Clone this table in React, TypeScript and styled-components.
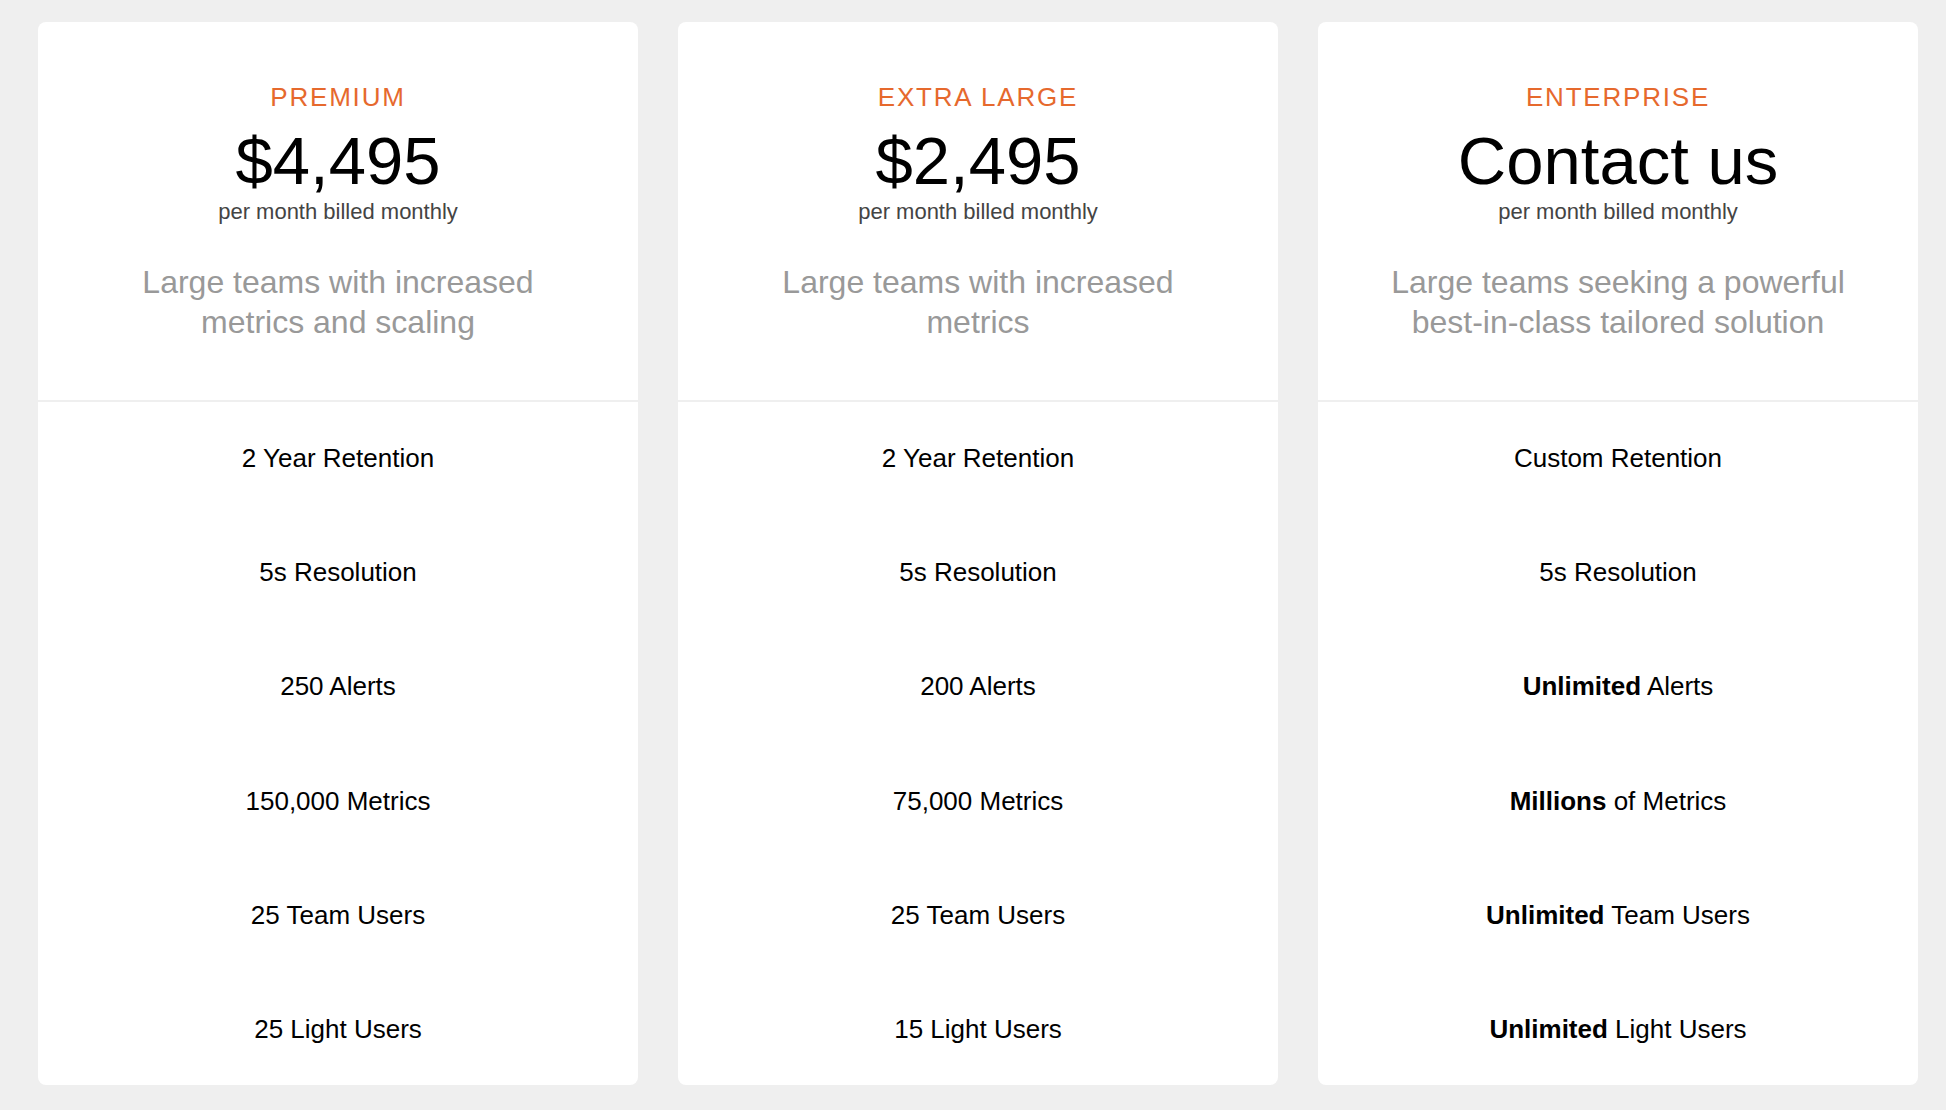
import React from "react";
import styled, { createGlobalStyle } from "styled-components";

const GlobalStyle = createGlobalStyle`
  html, body {
    margin: 0;
    padding: 0;
    background: #efefef;
    font-family: "Liberation Sans", Arial, Helvetica, sans-serif;
  }
  * { box-sizing: border-box; }
`;

const Page = styled.main`
  display: grid;
  grid-template-columns: repeat(3, 600px);
  column-gap: 40px;
  padding: 22px 28px 24px 38px;
  min-height: 1110px;
  align-items: start;
`;

const Card = styled.section`
  background: #ffffff;
  border-radius: 8px;
  overflow: hidden;
  display: flex;
  flex-direction: column;
`;

const Header = styled.header`
  display: flex;
  flex-direction: column;
  align-items: center;
  text-align: center;
  padding: 60px 60px 58px;
  border-bottom: 2px solid #efefef;
`;

const Tier = styled.h2`
  margin: 0 0 16px;
  font-size: 26px;
  line-height: 30px;
  font-weight: 400;
  letter-spacing: 1.8px;
  color: #e6692d;
  text-transform: uppercase;
`;

const Price = styled.div`
  font-size: 67px;
  line-height: 66px;
  color: #000;
  margin-bottom: 6px;
`;

const Billing = styled.div`
  font-size: 22px;
  line-height: 24px;
  color: #444;
  margin-bottom: 38px;
`;

const Blurb = styled.p`
  margin: 0;
  font-size: 32px;
  line-height: 40px;
  color: #999;
`;

const Features = styled.ul`
  list-style: none;
  margin: 0;
  padding: 0 0 0;
  display: flex;
  flex-direction: column;

  li:last-child {
    padding-bottom: 41px;
  }
`;

const Feature = styled.li`
  padding: 41px 20px 43.2px;
  font-size: 26px;
  line-height: 30px;
  text-align: center;
  color: #000;

  strong {
    font-weight: 700;
  }
`;

type FeatureItem = { strong?: string; text: string };

type Plan = {
  tier: string;
  price: string;
  blurb: string;
  features: FeatureItem[];
};

const plans: Plan[] = [
  {
    tier: "Premium",
    price: "$4,495",
    blurb: "Large teams with increased metrics and scaling",
    features: [
      { text: "2 Year Retention" },
      { text: "5s Resolution" },
      { text: "250 Alerts" },
      { text: "150,000 Metrics" },
      { text: "25 Team Users" },
      { text: "25 Light Users" },
    ],
  },
  {
    tier: "Extra Large",
    price: "$2,495",
    blurb: "Large teams with increased metrics",
    features: [
      { text: "2 Year Retention" },
      { text: "5s Resolution" },
      { text: "200 Alerts" },
      { text: "75,000 Metrics" },
      { text: "25 Team Users" },
      { text: "15 Light Users" },
    ],
  },
  {
    tier: "Enterprise",
    price: "Contact us",
    blurb: "Large teams seeking a powerful best-in-class tailored solution",
    features: [
      { text: "Custom Retention" },
      { text: "5s Resolution" },
      { strong: "Unlimited", text: " Alerts" },
      { strong: "Millions", text: " of Metrics" },
      { strong: "Unlimited", text: " Team Users" },
      { strong: "Unlimited", text: " Light Users" },
    ],
  },
];

export default function App() {
  return (
    <>
      <GlobalStyle />
      <Page>
        {plans.map((plan) => (
          <Card key={plan.tier}>
            <Header>
              <Tier>{plan.tier}</Tier>
              <Price>{plan.price}</Price>
              <Billing>per month billed monthly</Billing>
              <Blurb>{plan.blurb}</Blurb>
            </Header>
            <Features>
              {plan.features.map((f, i) => (
                <Feature key={i}>
                  {f.strong && <strong>{f.strong}</strong>}
                  {f.text}
                </Feature>
              ))}
            </Features>
          </Card>
        ))}
      </Page>
    </>
  );
}
